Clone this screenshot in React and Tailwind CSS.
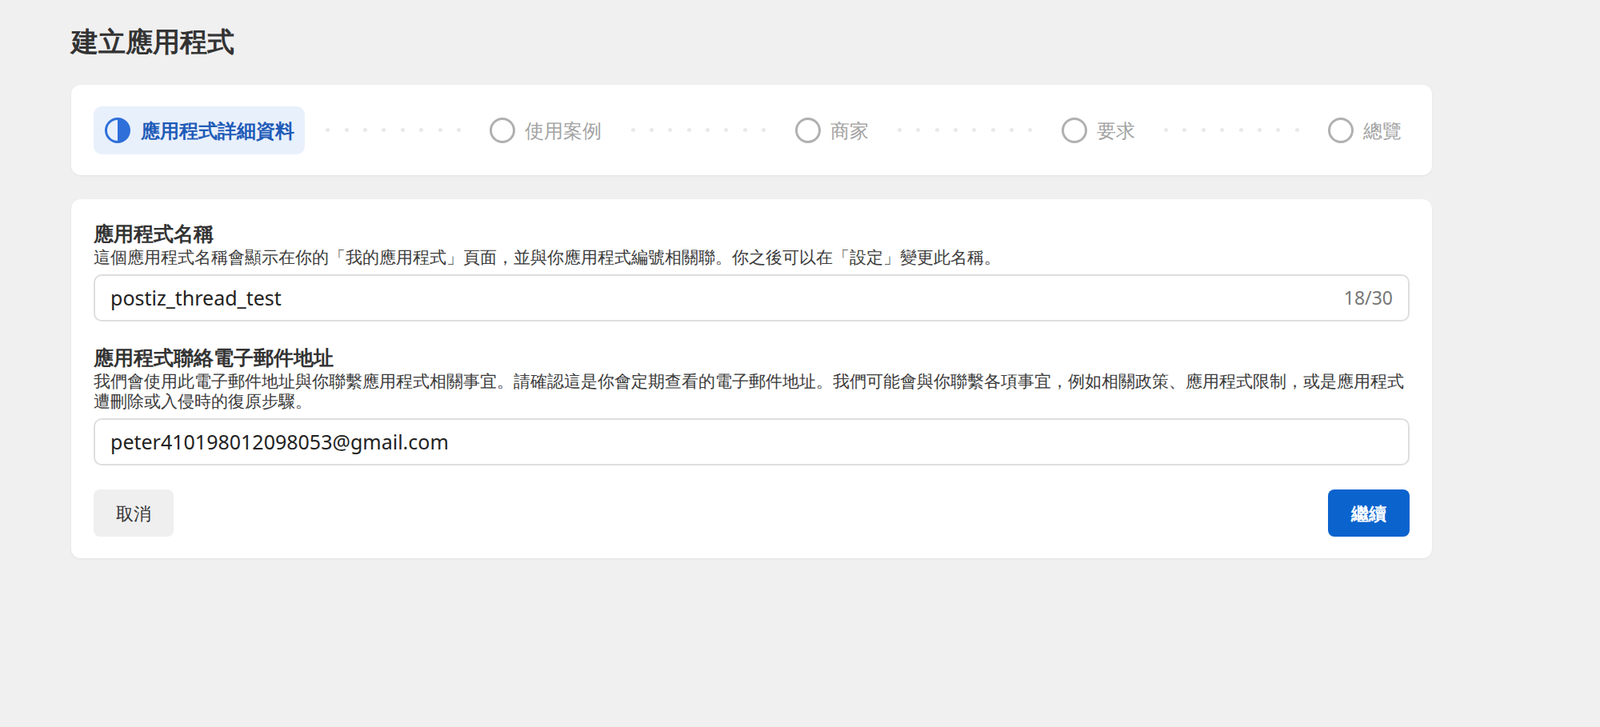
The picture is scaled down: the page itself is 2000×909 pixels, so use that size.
function Dots() {
  return (
    <div className="flex flex-1 items-center justify-evenly px-2">
      {Array.from({ length: 8 }).map((_, i) => (
        <span key={i} className="h-[5px] w-[5px] rounded-full bg-[#e9e9e9]" />
      ))}
    </div>
  );
}

function Step({ label }) {
  return (
    <div className="flex items-center gap-[12px] px-[10px]">
      <span className="h-[32px] w-[32px] rounded-full border-[3px] border-[#b0b0b0]" />
      <span className="text-[24px] font-medium text-[#a3a3a3]">{label}</span>
    </div>
  );
}

function Field({ title, desc, value, counter }) {
  return (
    <div>
      <h3 className="text-[25px] font-bold leading-[32px] text-[#333]">{title}</h3>
      <p className="mt-[2px] text-[20.5px] leading-[25px] text-[#3a3a3a]">{desc}</p>
      <div className="mt-[9px] flex h-[59px] items-center justify-between rounded-[10px] border-2 border-[#dedede] px-[19px]">
        <span className="text-[25px] text-[#222]">{value}</span>
        {counter ? <span className="text-[23px] text-[#777]">{counter}</span> : null}
      </div>
    </div>
  );
}

export default function App() {
  return (
    <div className="min-h-[909px] bg-[#f0f0f0] pl-[89px] pt-[26px] font-['Roboto','Noto_Sans_CJK_TC',sans-serif]">
      <div className="w-[1701px]">
        <h1 className="h-[50px] text-[34px] font-bold leading-[50px] text-[#333]">建立應用程式</h1>
        <div className="mt-[30px] flex h-[113px] items-center rounded-[12px] bg-white px-[28px] shadow-[0_1px_3px_rgba(0,0,0,0.06)]">
          <div className="flex h-[60px] items-center gap-[12px] rounded-[10px] bg-[#e8f0fc] px-[13px]">
            <svg width="34" height="34" viewBox="0 0 34 34">
              <circle cx="17" cy="17" r="14.5" fill="none" stroke="#2e6fd9" strokeWidth="3" />
              <path d="M17 2.5 A14.5 14.5 0 0 1 17 31.5 Z" fill="#2e6fd9" />
            </svg>
            <span className="text-[24px] font-bold text-[#1f5bb8]">應用程式詳細資料</span>
          </div>
          <Dots />
          <Step label="使用案例" />
          <Dots />
          <Step label="商家" />
          <Dots />
          <Step label="要求" />
          <Dots />
          <Step label="總覽" />
        </div>
        <div className="mt-[30px] rounded-[12px] bg-white px-[28px] pb-[27px] pt-[26px] shadow-[0_1px_3px_rgba(0,0,0,0.06)]">
          <Field
            title="應用程式名稱"
            desc="這個應用程式名稱會顯示在你的「我的應用程式」頁面，並與你應用程式編號相關聯。你之後可以在「設定」變更此名稱。"
            value="postiz_thread_test"
            counter="18/30"
          />
          <div className="mt-[28px]">
            <Field
              title="應用程式聯絡電子郵件地址"
              desc="我們會使用此電子郵件地址與你聯繫應用程式相關事宜。請確認這是你會定期查看的電子郵件地址。我們可能會與你聯繫各項事宜，例如相關政策、應用程式限制，或是應用程式遭刪除或入侵時的復原步驟。"
              value="peter410198012098053@gmail.com"
            />
          </div>
          <div className="mt-[30px] flex items-center justify-between">
            <button className="h-[59px] w-[100px] rounded-[8px] bg-[#efefef] text-[22px] text-[#333]">取消</button>
            <button className="h-[59px] w-[102px] rounded-[8px] bg-[#0b63ce] text-[22px] font-bold text-white">繼續</button>
          </div>
        </div>
      </div>
    </div>
  );
}
